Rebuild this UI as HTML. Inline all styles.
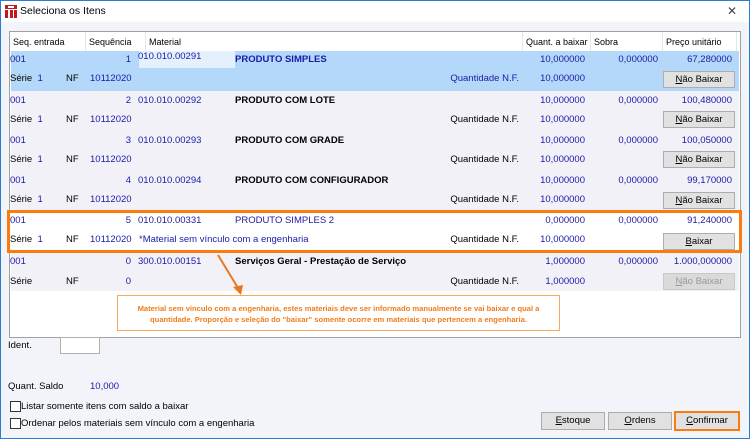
<!DOCTYPE html>
<html><head><meta charset="utf-8"><style>
*{margin:0;padding:0;box-sizing:border-box}
body{width:750px;height:439px;overflow:hidden;background:#f3f4f9;font-family:"Liberation Sans",sans-serif;font-size:9.5px;color:#000;position:relative}
.win{position:absolute;left:0;top:0;width:750px;height:439px;border:1px solid #2b7cd3;}
.title{position:absolute;left:0;top:0;width:748px;height:21px;background:#fff}
.title span{position:absolute;left:19px;top:4px;font-size:10.5px}
.x{position:absolute;right:12px;top:3px;font-size:12px;color:#444}
.grid{position:absolute;left:8px;top:30px;width:732px;height:307px;background:#fff;border:1px solid #a0a0a0}
.t{position:absolute;white-space:nowrap}
.b{color:#1a1aa8}
.r{text-align:right}
.row{position:absolute;left:1px;width:728px;height:40px;background:#f1f1f7}
.btn{position:absolute;background:#e1e1e1;border:1px solid #adadad;text-align:center;font-size:9.5px;line-height:15px}
.hd{position:absolute;top:0;height:19px;border-right:1px solid #e5e5e5;padding:5px 3px;background:#fff;white-space:nowrap;overflow:hidden;font-size:9px}
</style></head><body>
<div class="win">
<div class="title">
<svg style="position:absolute;left:4px;top:4px" width="12" height="13" viewBox="0 0 12 13"><rect x="0" y="0" width="12" height="4" fill="#c4161c"/><rect x="0" y="5" width="3" height="8" fill="#c4161c"/><rect x="5" y="5" width="3" height="8" fill="#c4161c"/><rect x="9" y="5" width="3" height="8" fill="#c4161c"/><rect x="3" y="1" width="6" height="2" fill="#fff"/></svg>
<span>Seleciona os Itens</span><div class="x">✕</div></div>

<div class="grid">
<div class="hd" style="left:0;width:76px">Seq. entrada</div>
<div class="hd" style="left:76px;width:60px">Sequência</div>
<div class="hd" style="left:136px;width:377px">Material</div>
<div class="hd" style="left:513px;width:68px">Quant. a baixar</div>
<div class="hd" style="left:581px;width:72px">Sobra</div>
<div class="hd" style="left:653px;width:74px">Preço unitário</div>

<div class="row" style="top:19px;background:#b4d8fa"><div style="position:absolute;left:128px;top:0;width:96px;height:17px;background:#e4f0fc"></div></div>
<div class="row" style="top:59px"></div>
<div class="row" style="top:99px"></div>
<div class="row" style="top:139px"></div>
<div class="row" style="top:179px;background:#fff"></div>
<div class="row" style="top:219px"></div>
</div>
</div>

<div style="position:absolute;left:0;top:0">
<!-- row1 -->
<div class="t b" style="left:10px;top:54px">001</div><div class="t b r" style="left:90px;width:41px;top:54px">1</div><div class="t b" style="left:138px;top:51px">010.010.00291</div><div class="t b" style="left:235px;top:54px;font-weight:bold">PRODUTO SIMPLES</div>
<div class="t b r" style="left:520px;width:65px;top:54px">10,000000</div><div class="t b r" style="left:600px;width:58px;top:54px">0,000000</div><div class="t b r" style="left:670px;width:62px;top:54px">67,280000</div>
<div class="t" style="left:10px;top:73px">Série <span class="b">&nbsp;1</span></div><div class="t" style="left:66px;top:73px">NF</div><div class="t b r" style="left:90px;width:41px;top:73px">10112020</div><div class="t b r" style="left:420px;width:99px;top:73px">Quantidade N.F.</div><div class="t b r" style="left:520px;width:65px;top:73px">10,000000</div>
<div class="btn" style="left:663px;top:71px;width:72px;height:17px"><u>N</u>ão Baixar</div>
<!-- row2 -->
<div class="t b" style="left:10px;top:95px">001</div><div class="t b r" style="left:90px;width:41px;top:95px">2</div><div class="t b" style="left:138px;top:95px">010.010.00292</div><div class="t" style="left:235px;top:95px;font-weight:bold">PRODUTO COM LOTE</div>
<div class="t b r" style="left:520px;width:65px;top:95px">10,000000</div><div class="t b r" style="left:600px;width:58px;top:95px">0,000000</div><div class="t b r" style="left:670px;width:62px;top:95px">100,480000</div>
<div class="t" style="left:10px;top:114px">Série <span class="b">&nbsp;1</span></div><div class="t" style="left:66px;top:114px">NF</div><div class="t b r" style="left:90px;width:41px;top:114px">10112020</div><div class="t r" style="left:420px;width:99px;top:114px">Quantidade N.F.</div><div class="t b r" style="left:520px;width:65px;top:114px">10,000000</div>
<div class="btn" style="left:663px;top:111px;width:72px;height:17px"><u>N</u>ão Baixar</div>
<!-- row3 -->
<div class="t b" style="left:10px;top:135px">001</div><div class="t b r" style="left:90px;width:41px;top:135px">3</div><div class="t b" style="left:138px;top:135px">010.010.00293</div><div class="t" style="left:235px;top:135px;font-weight:bold">PRODUTO COM GRADE</div>
<div class="t b r" style="left:520px;width:65px;top:135px">10,000000</div><div class="t b r" style="left:600px;width:58px;top:135px">0,000000</div><div class="t b r" style="left:670px;width:62px;top:135px">100,050000</div>
<div class="t" style="left:10px;top:154px">Série <span class="b">&nbsp;1</span></div><div class="t" style="left:66px;top:154px">NF</div><div class="t b r" style="left:90px;width:41px;top:154px">10112020</div><div class="t r" style="left:420px;width:99px;top:154px">Quantidade N.F.</div><div class="t b r" style="left:520px;width:65px;top:154px">10,000000</div>
<div class="btn" style="left:663px;top:151px;width:72px;height:17px"><u>N</u>ão Baixar</div>
<!-- row4 -->
<div class="t b" style="left:10px;top:175px">001</div><div class="t b r" style="left:90px;width:41px;top:175px">4</div><div class="t b" style="left:138px;top:175px">010.010.00294</div><div class="t" style="left:235px;top:175px;font-weight:bold">PRODUTO COM CONFIGURADOR</div>
<div class="t b r" style="left:520px;width:65px;top:175px">10,000000</div><div class="t b r" style="left:600px;width:58px;top:175px">0,000000</div><div class="t b r" style="left:670px;width:62px;top:175px">99,170000</div>
<div class="t" style="left:10px;top:194px">Série <span class="b">&nbsp;1</span></div><div class="t" style="left:66px;top:194px">NF</div><div class="t b r" style="left:90px;width:41px;top:194px">10112020</div><div class="t r" style="left:420px;width:99px;top:194px">Quantidade N.F.</div><div class="t b r" style="left:520px;width:65px;top:194px">10,000000</div>
<div class="btn" style="left:663px;top:192px;width:72px;height:17px"><u>N</u>ão Baixar</div>
<!-- row5 -->
<div class="t b" style="left:10px;top:215px">001</div><div class="t b r" style="left:90px;width:41px;top:215px">5</div><div class="t b" style="left:138px;top:215px">010.010.00331</div><div class="t b" style="left:235px;top:215px">PRODUTO SIMPLES 2</div>
<div class="t b r" style="left:520px;width:65px;top:215px">0,000000</div><div class="t b r" style="left:600px;width:58px;top:215px">0,000000</div><div class="t b r" style="left:670px;width:62px;top:215px">91,240000</div>
<div class="t" style="left:10px;top:234px">Série <span class="b">&nbsp;1</span></div><div class="t" style="left:66px;top:234px">NF</div><div class="t b r" style="left:90px;width:41px;top:234px">10112020</div><div class="t b" style="left:139px;top:234px">*Material sem vínculo com a engenharia</div><div class="t r" style="left:420px;width:99px;top:234px">Quantidade N.F.</div><div class="t b r" style="left:520px;width:65px;top:234px">10,000000</div>
<div class="btn" style="left:663px;top:233px;width:72px;height:17px"><u>B</u>aixar</div>
<div style="position:absolute;left:7px;top:210px;width:735px;height:43px;border:3px solid #fb7c0e"></div>
<!-- row6 -->
<div class="t b" style="left:10px;top:256px">001</div><div class="t b r" style="left:90px;width:41px;top:256px">0</div><div class="t b" style="left:138px;top:256px">300.010.00151</div><div class="t" style="left:235px;top:256px;font-weight:bold">Serviços Geral - Prestação de Serviço</div>
<div class="t b r" style="left:520px;width:65px;top:256px">1,000000</div><div class="t b r" style="left:600px;width:58px;top:256px">0,000000</div><div class="t b r" style="left:670px;width:62px;top:256px">1.000,000000</div>
<div class="t" style="left:10px;top:276px">Série</div><div class="t" style="left:66px;top:276px">NF</div><div class="t b r" style="left:90px;width:41px;top:276px">0</div><div class="t r" style="left:420px;width:99px;top:276px">Quantidade N.F.</div><div class="t b r" style="left:520px;width:65px;top:276px">1,000000</div>
<div class="btn" style="left:663px;top:273px;width:72px;height:17px;color:#999;background:#dadada;border-color:#c8c8c8"><u>N</u>ão Baixar</div>
<!-- callout -->
<svg style="position:absolute;left:210px;top:252px" width="40" height="46"><line x1="8" y1="3" x2="28" y2="36" stroke="#e87722" stroke-width="2"/><polygon points="23,35 33,33 31,43" fill="#e87722"/></svg>
<div style="position:absolute;left:117px;top:295px;width:443px;height:36px;border:1px solid #f5a860;background:#fff;color:#f07d1a;font-weight:bold;font-size:7.6px;text-align:center;padding-top:7px;line-height:11px">Material sem vínculo com a engenharia, estes materiais deve ser informado manualmente se vai baixar e qual a<br>quantidade. Proporção e seleção do "baixar" somente ocorre em materiais que pertencem a engenharia.</div>
<!-- bottom -->
<div class="t" style="left:8px;top:340px">Ident.</div>
<div style="position:absolute;left:60px;top:337px;width:40px;height:17px;background:#fff;border:1px solid #b0b0b0"></div>
<div class="t" style="left:8px;top:381px">Quant. Saldo</div><div class="t b" style="left:90px;top:381px">10,000</div>
<div style="position:absolute;left:10px;top:401px;width:11px;height:11px;border:1px solid #333;background:#fff"></div><div class="t" style="left:21px;top:401px">Listar somente itens com saldo a baixar</div>
<div style="position:absolute;left:10px;top:418px;width:11px;height:11px;border:1px solid #333;background:#fff"></div><div class="t" style="left:21px;top:418px">Ordenar pelos materiais sem vínculo com a engenharia</div>
<div class="btn" style="left:541px;top:412px;width:64px;height:18px;line-height:16px"><u>E</u>stoque</div>
<div class="btn" style="left:608px;top:412px;width:64px;height:18px;line-height:16px"><u>O</u>rdens</div>
<div class="btn" style="left:674px;top:411px;width:66px;height:20px;line-height:16px;border:2px solid #fb7c0e"><u>C</u>onfirmar</div>
</div>
</body></html>
